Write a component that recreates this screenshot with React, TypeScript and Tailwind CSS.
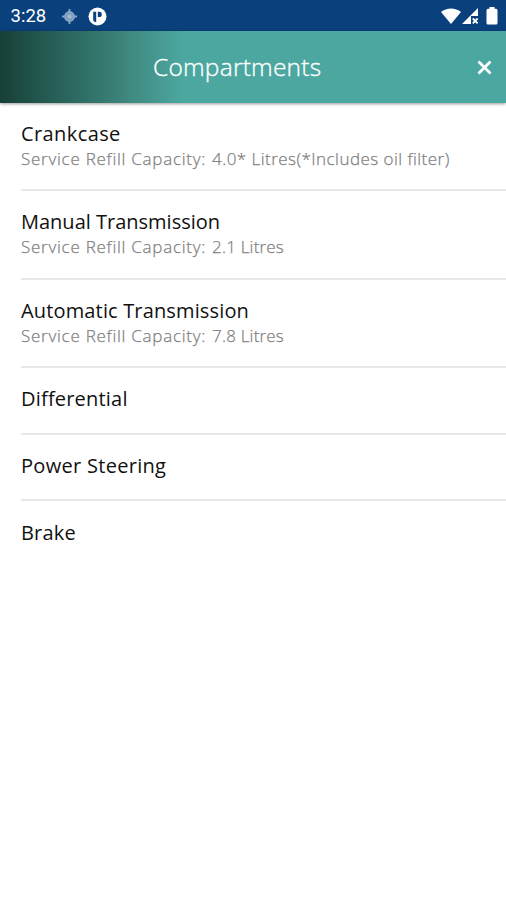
import React from "react";

type Item = { title: string; titleClass: string; value?: string; valueClass?: string; rowClass: string };

const items: Item[] = [
  { title: "Crankcase", titleClass: "tracking-[0.4px]", value: "4.0* Litres(*Includes oil filter)", valueClass: "tracking-[0.46px]", rowClass: "h-[88px] pt-[17px] border-b-2" },
  { title: "Manual Transmission", titleClass: "tracking-[0px]", value: "2.1 Litres", valueClass: "tracking-[0.2px]", rowClass: "h-[89px] pt-[17px] border-b-2" },
  { title: "Automatic Transmission", titleClass: "tracking-[0.15px]", value: "7.8 Litres", valueClass: "tracking-[0.2px]", rowClass: "h-[88px] pt-[17px] border-b-2" },
  { title: "Differential", titleClass: "tracking-[0.2px]", rowClass: "h-[67px] pt-[17px] border-b-2" },
  { title: "Power Steering", titleClass: "tracking-[0.3px]", rowClass: "h-[66px] pt-[17px] border-b-2" },
  { title: "Brake", titleClass: "tracking-[0.2px]", rowClass: "h-[67px] pt-[18px] border-b-0" },
];

function StatusBar() {
  return (
    <div className="flex h-[31px] items-center bg-[#0a407b] pl-[10.5px] pr-[8px] pt-[1px] text-white">
      <span className="w-[35.5px] whitespace-nowrap font-['Roboto',sans-serif] text-[18.5px] leading-none">3:28</span>
      <svg className="ml-[15px]" width="17" height="17" viewBox="0 0 17 17" fill="none">
        <circle cx="8.5" cy="8.5" r="5.4" fill="#89a6c4" />
        <path d="M8.5 1v15M1 8.5h15" stroke="#89a6c4" strokeWidth="1.8" />
        <circle cx="8.5" cy="8.5" r="3.3" stroke="#7396ba" strokeWidth="0.8" />
        <circle cx="8.5" cy="8.5" r="1.6" fill="#a9bfd5" />
      </svg>
      <svg className="ml-[10px]" width="19" height="19" viewBox="0 0 19 19">
        <circle cx="9.5" cy="9.5" r="9" fill="#fff" />
        <path d="M5.2 4.8h3v10.4a6 6 0 0 1-3-1.8zM9.8 4.8h1.4a2.6 2.6 0 0 1 0 5.2H9.8z" fill="#0a407b" />
      </svg>
      <div className="ml-auto flex items-center">
        <svg width="20" height="17" viewBox="0 0 20 17">
          <path d="M0 4C5.5-.8 14.5-.8 20 4L10 16z" fill="#fff" />
        </svg>
        <svg className="ml-[1px]" width="17" height="17" viewBox="0 0 17 17">
          <path d="M16 0v8H9v8H0z" fill="#fff" />
          <path d="M10.8 10.5l4.8 4.8M15.6 10.5l-4.8 4.8" stroke="#fff" strokeWidth="1.8" />
        </svg>
        <svg className="ml-[7.5px]" width="12" height="18" viewBox="0 0 12 18">
          <path d="M3.5 0h5v1.8H10a1.5 1.5 0 0 1 1.5 1.5v12.7a1.5 1.5 0 0 1-1.5 1.5H2a1.5 1.5 0 0 1-1.5-1.5V3.3A1.5 1.5 0 0 1 2 1.8h1.5z" fill="#fff" />
        </svg>
      </div>
    </div>
  );
}

function Header() {
  return (
    <header className="relative z-10 grid h-[72px] grid-cols-[140px_1fr_140px] items-center bg-[linear-gradient(90deg,#173f37_0px,#245c53_48px,#35776e_100px,#428f86_140px,#4ba79f_182px,#4ba7a1_100%)] shadow-[0_1px_3px_rgba(0,0,0,0.4)]">
      <h1 className="col-start-2 pl-[13px] whitespace-nowrap font-['Open_Sans',sans-serif] text-[24.5px] font-light leading-[32px] tracking-[0.22px] text-white [-webkit-text-stroke:0.35px_white]">Compartments</h1>
      <button aria-label="Close" className="mr-[14px] justify-self-end">
        <svg width="15" height="15" viewBox="0 0 15 15">
          <path d="M1.5 1.5l12 12M13.5 1.5l-12 12" stroke="#fff" strokeWidth="2.8" />
        </svg>
      </button>
    </header>
  );
}

export default function App() {
  return (
    <div className="flex h-[900px] w-[506px] flex-col overflow-hidden bg-white font-['Open_Sans',sans-serif]">
      <StatusBar />
      <Header />
      <ul className="pl-[21px]">
        {items.map((item) => (
          <li key={item.title} className={`border-[#e8e8e8] whitespace-nowrap ${item.rowClass}`}>
            <div className={`h-[27px] text-[20px] leading-[28px] text-[#111] ${item.titleClass}`}>{item.title}</div>
            {item.value && (
              <div className="flex h-[23px] text-[17px] font-light leading-[23px] text-[#808080] [-webkit-text-stroke:0.25px_#808080]">
                <span className="w-[191px] tracking-[0.74px]">Service Refill Capacity:</span>
                <span className={item.valueClass}>{item.value}</span>
              </div>
            )}
          </li>
        ))}
      </ul>
    </div>
  );
}
